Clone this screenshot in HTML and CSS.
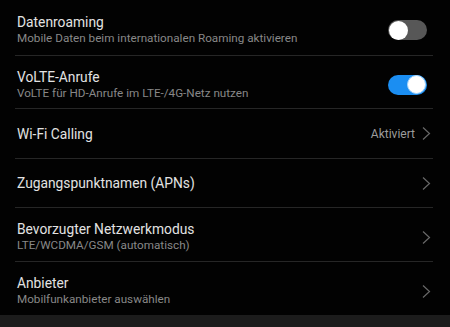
FILE: index.html
```html
<!DOCTYPE html>
<html lang="de">
  <head>
    <meta charset="UTF-8" />
    <meta name="viewport" content="width=device-width, initial-scale=1.0" />
    <title>Mobile Daten</title>
    <link rel="stylesheet" href="styles.css">
  </head>
  <body>
    <div class="list">
      <!-- Datenroaming -->
      <div class="row two r1">
        <div class="text">
          <div class="title">Datenroaming</div>
          <div class="sub">Mobile Daten beim internationalen Roaming aktivieren</div>
        </div>
        <div class="switch"><span class="knob"></span></div>
      </div>

      <!-- VoLTE -->
      <div class="row two r2">
        <div class="text">
          <div class="title">VoLTE-Anrufe</div>
          <div class="sub">VoLTE für HD-Anrufe im LTE-/4G-Netz nutzen</div>
        </div>
        <div class="switch on"><span class="knob"></span></div>
      </div>

      <div class="row one r3">
        <div class="text">
          <div class="title">Wi-Fi Calling</div>
        </div>
        <span class="value">Aktiviert</span>
        <svg class="chev" viewBox="0 0 9 13"><path d="M1 0.5 L7.5 6.5 L1 12.5" /></svg>
      </div>

      <div class="row one r4">
        <div class="text">
          <div class="title">Zugangspunktnamen (APNs)</div>
        </div>
        <svg class="chev" viewBox="0 0 9 13"><path d="M1 0.5 L7.5 6.5 L1 12.5" /></svg>
      </div>

      <div class="row two r5">
        <div class="text">
          <div class="title">Bevorzugter Netzwerkmodus</div>
          <div class="sub">LTE/WCDMA/GSM (automatisch)</div>
        </div>
        <svg class="chev" viewBox="0 0 9 13"><path d="M1 0.5 L7.5 6.5 L1 12.5" /></svg>
      </div>

      <div class="row two r6 last">
        <div class="text">
          <div class="title">Anbieter</div>
          <div class="sub">Mobilfunkanbieter auswählen</div>
        </div>
        <svg class="chev" viewBox="0 0 9 13"><path d="M1 0.5 L7.5 6.5 L1 12.5" /></svg>
      </div>
    </div>
    <div class="bottom"></div>
  </body>
</html>
```

FILE: styles.css
```css
* {
  margin: 0;
  padding: 0;
  box-sizing: border-box;
}

body {
  width: 450px;
  height: 327px;
  background: #020202;
  font-family: Roboto, "Noto Sans", sans-serif;
  overflow: hidden;
  display: flex;
  flex-direction: column;
}

.list {
  flex: 1;
  padding-left: 15px;
}

/* ---------- rows ---------- */
.row {
  display: flex;
  align-items: center;
  width: 418px;
  border-bottom: 1px solid #262626;
}

/* two lines of text sit a little below the middle */
.row.two {
  padding-top: 5px;
}

.r1 { height: 56px; padding-top: 4px; }
.r2 { height: 53px; }
.r3 { height: 50px; }
.r4 { height: 49px; }
.r5 { height: 54px; }
.r6 { height: 53px; }

.row.last {
  border-bottom: none;
}

.text {
  flex: 1;
  padding-left: 2px;
}

.title {
  font-size: 13.8px;
  color: #e2e2e2;
  line-height: 16px;
}

.sub {
  font-size: 11.7px;
  color: #888888;
  line-height: 15px;
  margin-top: 1px;
}

.value {
  font-size: 12px;
  color: #9c9c9c;
  margin-right: 7px;
}

.chev {
  width: 9px;
  height: 13px;
  margin-right: 2px;
}

.chev path {
  fill: none;
  stroke: #686868;
  stroke-width: 1.2;
}

/* ---------- switch ---------- */
.switch {
  width: 39px;
  height: 20px;
  border-radius: 10px;
  background: #575757;
  display: flex;
  align-items: center;
  padding: 0 1px;
  margin-right: 6px;
}

.knob {
  width: 19px;
  height: 19px;
  border-radius: 50%;
  background: #ffffff;
}

.switch.on {
  background: #1b8ef2;
  justify-content: flex-end;
}

.switch.on .knob {
  border: 1.5px solid #a8d6fb;
}

.bottom {
  height: 12px;
  background: #1c1c1c;
}
```
